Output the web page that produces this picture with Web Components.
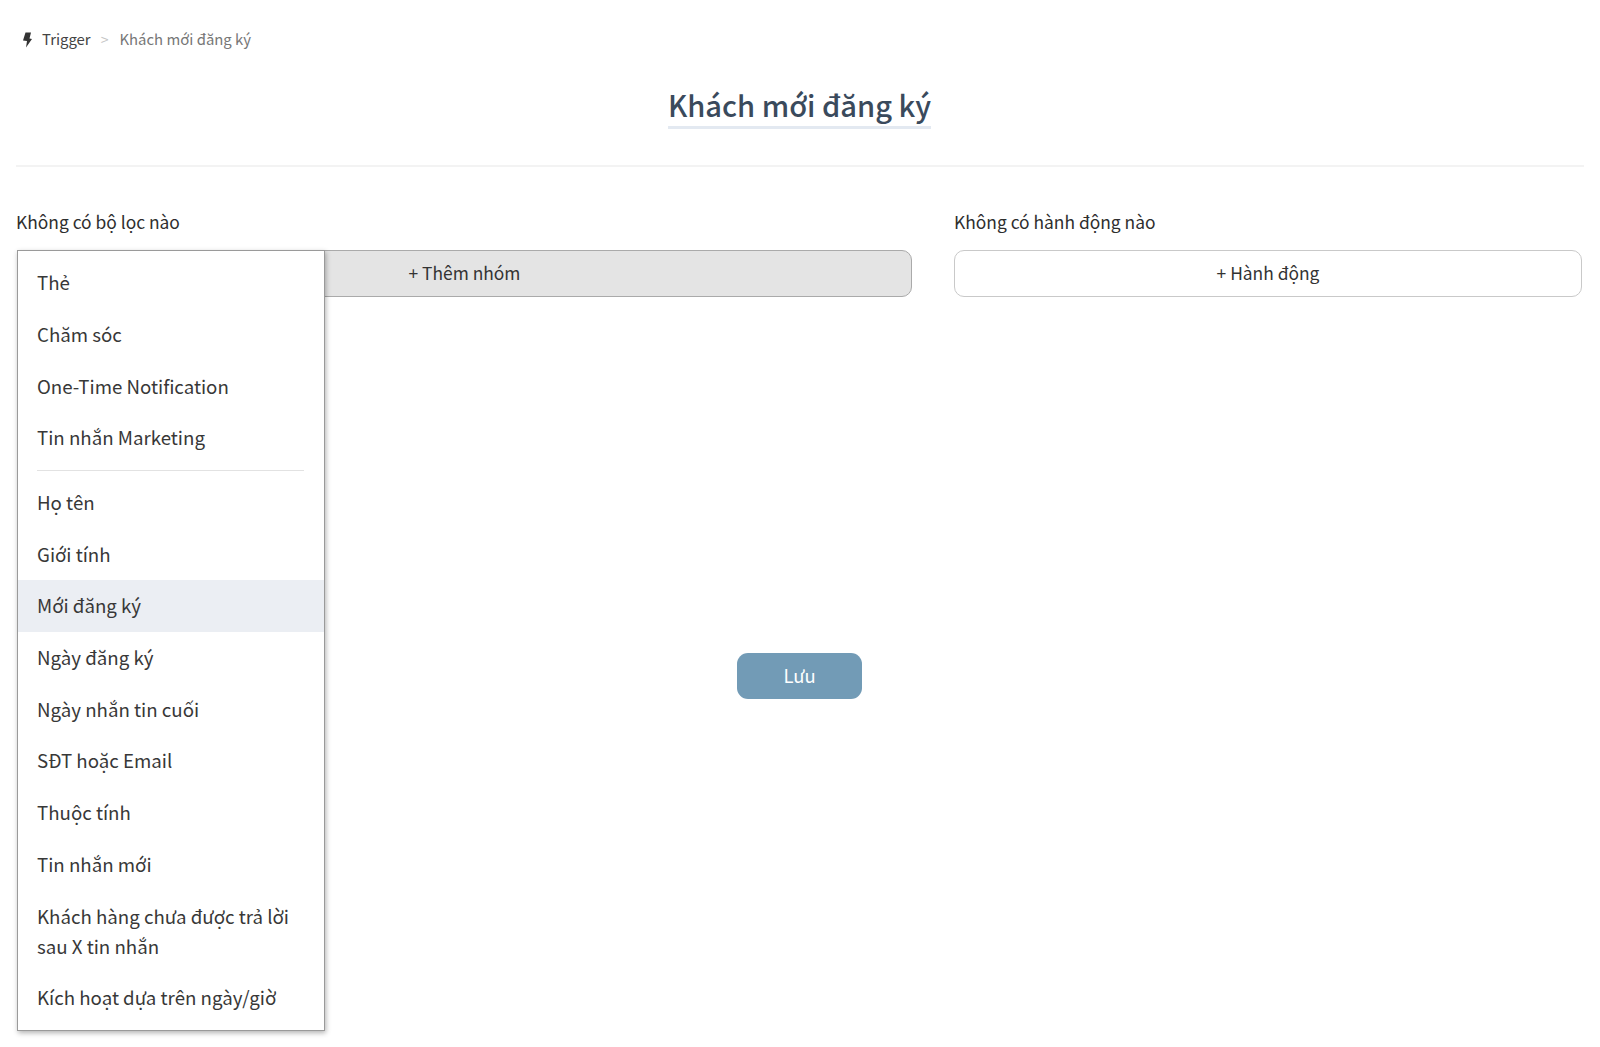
<!DOCTYPE html>
<html lang="vi"><head><meta charset="utf-8"><title>Trigger</title>
<style>
html,body{margin:0;padding:0;background:#fff;height:1047px;overflow:hidden}
body{font-family:"Noto Sans CJK SC","Noto Sans",sans-serif;color:#2b2b2b}
</style></head><body>
<trigger-page></trigger-page>
<script>
function def(name,html){customElements.define(name,class extends HTMLElement{constructor(){super();this.attachShadow({mode:'open'}).innerHTML=html;}});}
def('bread-crumb',`<style>:host{display:flex;align-items:center;height:24px;font-size:14.9px;line-height:24px;color:#444}
svg{width:12px;height:17px;margin-left:5px;margin-right:9px}
.sep{color:#c4c4c4;margin:0 11px 0 10px;font-size:14px}.cur{color:#777}</style>
<svg viewBox="0 0 12 17"><path fill="#333" d="M4.5 1.5H10L8.5 7.5 11 8 5 16.5 6 10 2 9.5z"/></svg><span>Trigger</span><span class="sep">&gt;</span><span class="cur"><slot></slot></span>`);
def('page-title',`<style>:host{display:flex;justify-content:center;box-sizing:content-box;height:84px;margin-top:30px;padding-right:1px;border-bottom:2px solid #f3f3f3;}
h1{margin:0;height:45px;font-size:29.1px;line-height:46px;font-weight:500;color:#3a4a5c;border-bottom:3px solid #e3e9f1}</style><h1><slot></slot></h1>`);
def('add-button',`<style>:host{display:flex;align-items:center;justify-content:center;box-sizing:border-box;height:46.5px;padding-bottom:1.5px;border:1px solid #c9c9c9;border-radius:10px;background:#fff;font-size:17.4px;color:#333}
:host([active]){background:#e4e4e4;border-color:#aaa;margin-left:1px}</style><slot></slot>`);
def('menu-item',`<style>:host{display:block;padding:10.2px 19.5px 12.2px;font-size:18.7px;line-height:29.3px;color:#383838}
:host([selected]){background:#ebeef3}</style><slot></slot>`);
def('menu-rule',`<style>:host{display:block;height:1px;background:#e2e2e2;margin:6px 20.5px 6px 19.5px}</style>`);
def('filter-menu',`<style>:host{position:absolute;left:.5px;top:0;z-index:2;box-sizing:border-box;width:308.5px;height:781px;padding:6px 0;background:#fff;border:1.5px solid #9a9a9a;box-shadow:1px 2px 5px rgba(0,0,0,.3)}</style><slot></slot>`);
def('rule-column',`<style>:host{display:block;position:relative}
.l{height:28px;line-height:28px;font-size:17.4px;color:#2e2e2e;margin-bottom:14px}</style><div class="l"><slot name="label"></slot></div><slot></slot>`);
def('save-button',`<style>:host{display:flex;align-items:center;justify-content:center;box-sizing:border-box;width:125px;height:46.5px;padding-bottom:2px;border-radius:11px;background:#729bb6;color:#fff;font-size:18.4px}</style><slot></slot>`);
def('trigger-page',`<style>:host{display:block;padding:27px 16px 0}
.grid{display:grid;grid-template-columns:896px 628px;column-gap:42px;margin-top:41px}
.save{display:flex;justify-content:center;margin-top:356px;padding-right:1px}</style>
<bread-crumb>Khách mới đăng ký</bread-crumb>
<page-title>Khách mới đăng ký</page-title>
<div class="grid">
<rule-column><span slot="label">Không có bộ lọc nào</span>
<div style="position:relative"><add-button active>+ Thêm nhóm</add-button>
<filter-menu>
<menu-item>Thẻ</menu-item><menu-item>Chăm sóc</menu-item><menu-item>One-Time Notification</menu-item><menu-item>Tin nhắn Marketing</menu-item><menu-rule></menu-rule>
<menu-item>Họ tên</menu-item><menu-item>Giới tính</menu-item><menu-item selected>Mới đăng ký</menu-item><menu-item>Ngày đăng ký</menu-item><menu-item>Ngày nhắn tin cuối</menu-item><menu-item>SĐT hoặc Email</menu-item><menu-item>Thuộc tính</menu-item><menu-item>Tin nhắn mới</menu-item><menu-item style="padding-top:11.2px">Khách hàng chưa được trả lời sau X tin nhắn</menu-item><menu-item>Kích hoạt dựa trên ngày/giờ</menu-item>
</filter-menu></div></rule-column>
<rule-column><span slot="label">Không có hành động nào</span><add-button>+ Hành động</add-button></rule-column>
</div>
<div class="save"><save-button>Lưu</save-button></div>`);
</script>
</body></html>
